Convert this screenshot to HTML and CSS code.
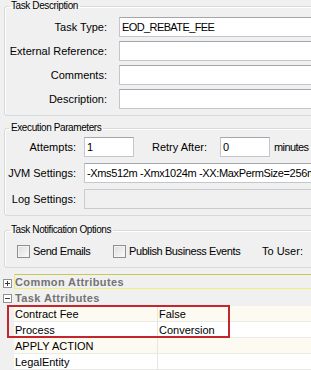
FILE: index.html
```html
<!DOCTYPE html>
<html lang="en">
<head>
  <meta charset="UTF-8">
  <meta name="viewport" content="width=device-width, initial-scale=1.0">
  <title>Task Editor</title>
  <link rel="stylesheet" href="styles.css">
</head>
<body>
  <div class="screen">
    <fieldset class="group group-desc">
      <legend>Task Description</legend>
      <div class="desc-grid">
        <label class="field-label">Task Type:</label>
        <input class="field field-caps" type="text" value="EOD_REBATE_FEE">
        <label class="field-label">External Reference:</label>
        <input class="field" type="text" value="">
        <label class="field-label">Comments:</label>
        <input class="field" type="text" value="">
        <label class="field-label">Description:</label>
        <input class="field" type="text" value="">
      </div>
    </fieldset>

    <fieldset class="group group-exec">
      <legend>Execution Parameters</legend>
      <div class="exec-grid">
        <label class="field-label">Attempts:</label>
        <div class="exec-inline">
          <input class="field field-short" type="text" value="1">
          <label class="retry-label">Retry After:</label>
          <input class="field field-short" type="text" value="0">
          <span class="unit">minutes</span>
        </div>
        <label class="field-label">JVM Settings:</label>
        <input class="field field-tight" type="text" value="-Xms512m -Xmx1024m -XX:MaxPermSize=256m">
        <label class="field-label">Log Settings:</label>
        <input class="field" type="text" value="" disabled>
      </div>
    </fieldset>

    <fieldset class="group group-notify">
      <legend>Task Notification Options</legend>
      <div class="notify-row">
        <label class="check check-email"><span class="check-box"></span>Send Emails</label>
        <label class="check check-events"><span class="check-box"></span>Publish Business Events</label>
        <span class="to-user">To User:</span>
      </div>
    </fieldset>

    <div class="prop-grid">
      <div class="category">
        <span class="toggle">
          <svg width="9" height="9" viewBox="0 0 9 9"><rect x="0.5" y="0.5" width="8" height="8" fill="#fff" stroke="#919191"/><path d="M2 4.5h5M4.5 2v5" stroke="#3c3c3c"/></svg>
        </span>
        <span class="cat-title cat-focused">Common Attributes</span>
      </div>
      <div class="category">
        <span class="toggle">
          <svg width="9" height="9" viewBox="0 0 9 9"><rect x="0.5" y="0.5" width="8" height="8" fill="#fff" stroke="#919191"/><path d="M2 4.5h5" stroke="#3c3c3c"/></svg>
        </span>
        <span class="cat-title">Task Attributes</span>
      </div>
      <div class="prop-row">
        <span class="prop-name">Contract Fee</span>
        <span class="prop-value">False</span>
      </div>
      <div class="prop-row">
        <span class="prop-name">Process</span>
        <span class="prop-value">Conversion</span>
      </div>
      <div class="prop-row">
        <span class="prop-name">APPLY ACTION</span>
        <span class="prop-value"></span>
      </div>
      <div class="prop-row">
        <span class="prop-name">LegalEntity</span>
        <span class="prop-value"></span>
      </div>
      <div class="highlight"></div>
    </div>
  </div>
</body>
</html>
```

FILE: styles.css
```css
html,
body {
  margin: 0;
  overflow: hidden;
}

body {
  font-family: 'Liberation Sans', Arial, sans-serif;
  font-size: 11px;
  color: #000;
  background-color: #f0f0f0;
}

.screen {
  width: 440px;
  padding-left: 4px;
  box-sizing: border-box;
}

/* group boxes */
.group {
  margin: 0;
  padding: 0;
  border: 1px solid #d5dadd;
  border-radius: 3px;
  box-shadow: inset 1px 1px 0 #fff;
}

.group legend {
  margin-left: 4px;
  padding: 0 2px;
  font-size: 10px;
  line-height: 12px;
  letter-spacing: -0.4px;
}

.group-desc {
  padding: 5px 0 6px 0;
}

.group-exec {
  margin-top: 6px;
  padding: 3px 0 6px 0;
}

.group-notify {
  margin-top: 8px;
  padding: 5px 0 6px 0;
}

.field-label {
  text-align: right;
  align-self: center;
  white-space: nowrap;
}

.desc-grid {
  display: grid;
  grid-template-columns: 102px 1fr;
  column-gap: 12px;
  row-gap: 4px;
}

.exec-grid {
  display: grid;
  grid-template-columns: 71px 1fr;
  column-gap: 8px;
  row-gap: 6px;
}

.field {
  height: 20px;
  box-sizing: border-box;
  margin: 0;
  padding: 0 2px;
  border: 1px solid #c3c6cc;
  border-top-color: #a3a6ab;
  background-color: #fff;
  font-family: inherit;
  font-size: 11px;
  color: #000;
  width: 100%;
}

.field:disabled {
  background-color: #f0f0f0;
  border-color: #c9cbce;
}

.field-caps {
  letter-spacing: -0.6px;
}

.field-tight {
  letter-spacing: -0.35px;
}

.exec-inline {
  display: flex;
  align-items: center;
}

.field-short {
  width: 50px;
  flex: none;
}

.retry-label {
  margin-left: 18px;
  width: 68px;
}

.unit {
  margin-left: 4px;
  letter-spacing: -0.6px;
  white-space: nowrap;
}

/* notification row */
.notify-row {
  display: flex;
  align-items: center;
  height: 20px;
  padding-left: 12px;
}

.check {
  display: flex;
  align-items: center;
  white-space: nowrap;
  letter-spacing: -0.4px;
}

.check-email {
  width: 96px;
}

.check-events {
  width: 149px;
}

.check-box {
  width: 13px;
  height: 13px;
  box-sizing: border-box;
  margin-right: 3px;
  border: 1px solid #8f8f8f;
  background: linear-gradient(135deg, #dcdcdc, #fbfbfb);
  box-shadow: inset 0 0 0 1px #f4f4f4;
}

/* property grid */
.prop-grid {
  position: relative;
  margin-top: 6px;
  margin-left: -4px;
}

.category {
  display: flex;
  height: 16px;
}

.toggle {
  width: 14px;
  flex: none;
  padding: 5px 0 0 3px;
  box-sizing: border-box;
  line-height: 0;
}

.category + .category .toggle {
  padding-top: 4px;
}

.cat-title {
  flex: 1;
  height: 15px;
  box-sizing: border-box;
  padding-left: 1px;
  font-weight: bold;
  font-size: 11px;
  letter-spacing: 0.4px;
  line-height: 16px;
  color: #737373;
}

.cat-focused {
  border: 1px solid #f2ee7a;
  border-top-color: #cbc65a;
  line-height: 14px;
  padding-left: 0;
}

.prop-row {
  display: grid;
  grid-template-columns: 143px 1fr;
  margin-left: 14px;
  height: 16px;
  box-sizing: border-box;
  border-bottom: 1px solid #ebebe6;
  background-color: #fcfaf1;
  line-height: 16px;
}

.prop-row:nth-child(even) {
  background-color: #fff;
}

.prop-name {
  padding-left: 1px;
  white-space: nowrap;
}

.prop-value {
  padding-left: 1px;
  border-left: 1px solid #e6e6e2;
}

.highlight {
  position: absolute;
  left: 7px;
  top: 31px;
  width: 223px;
  height: 33px;
  box-sizing: border-box;
  border: 2px solid #c4262e;
}
```
